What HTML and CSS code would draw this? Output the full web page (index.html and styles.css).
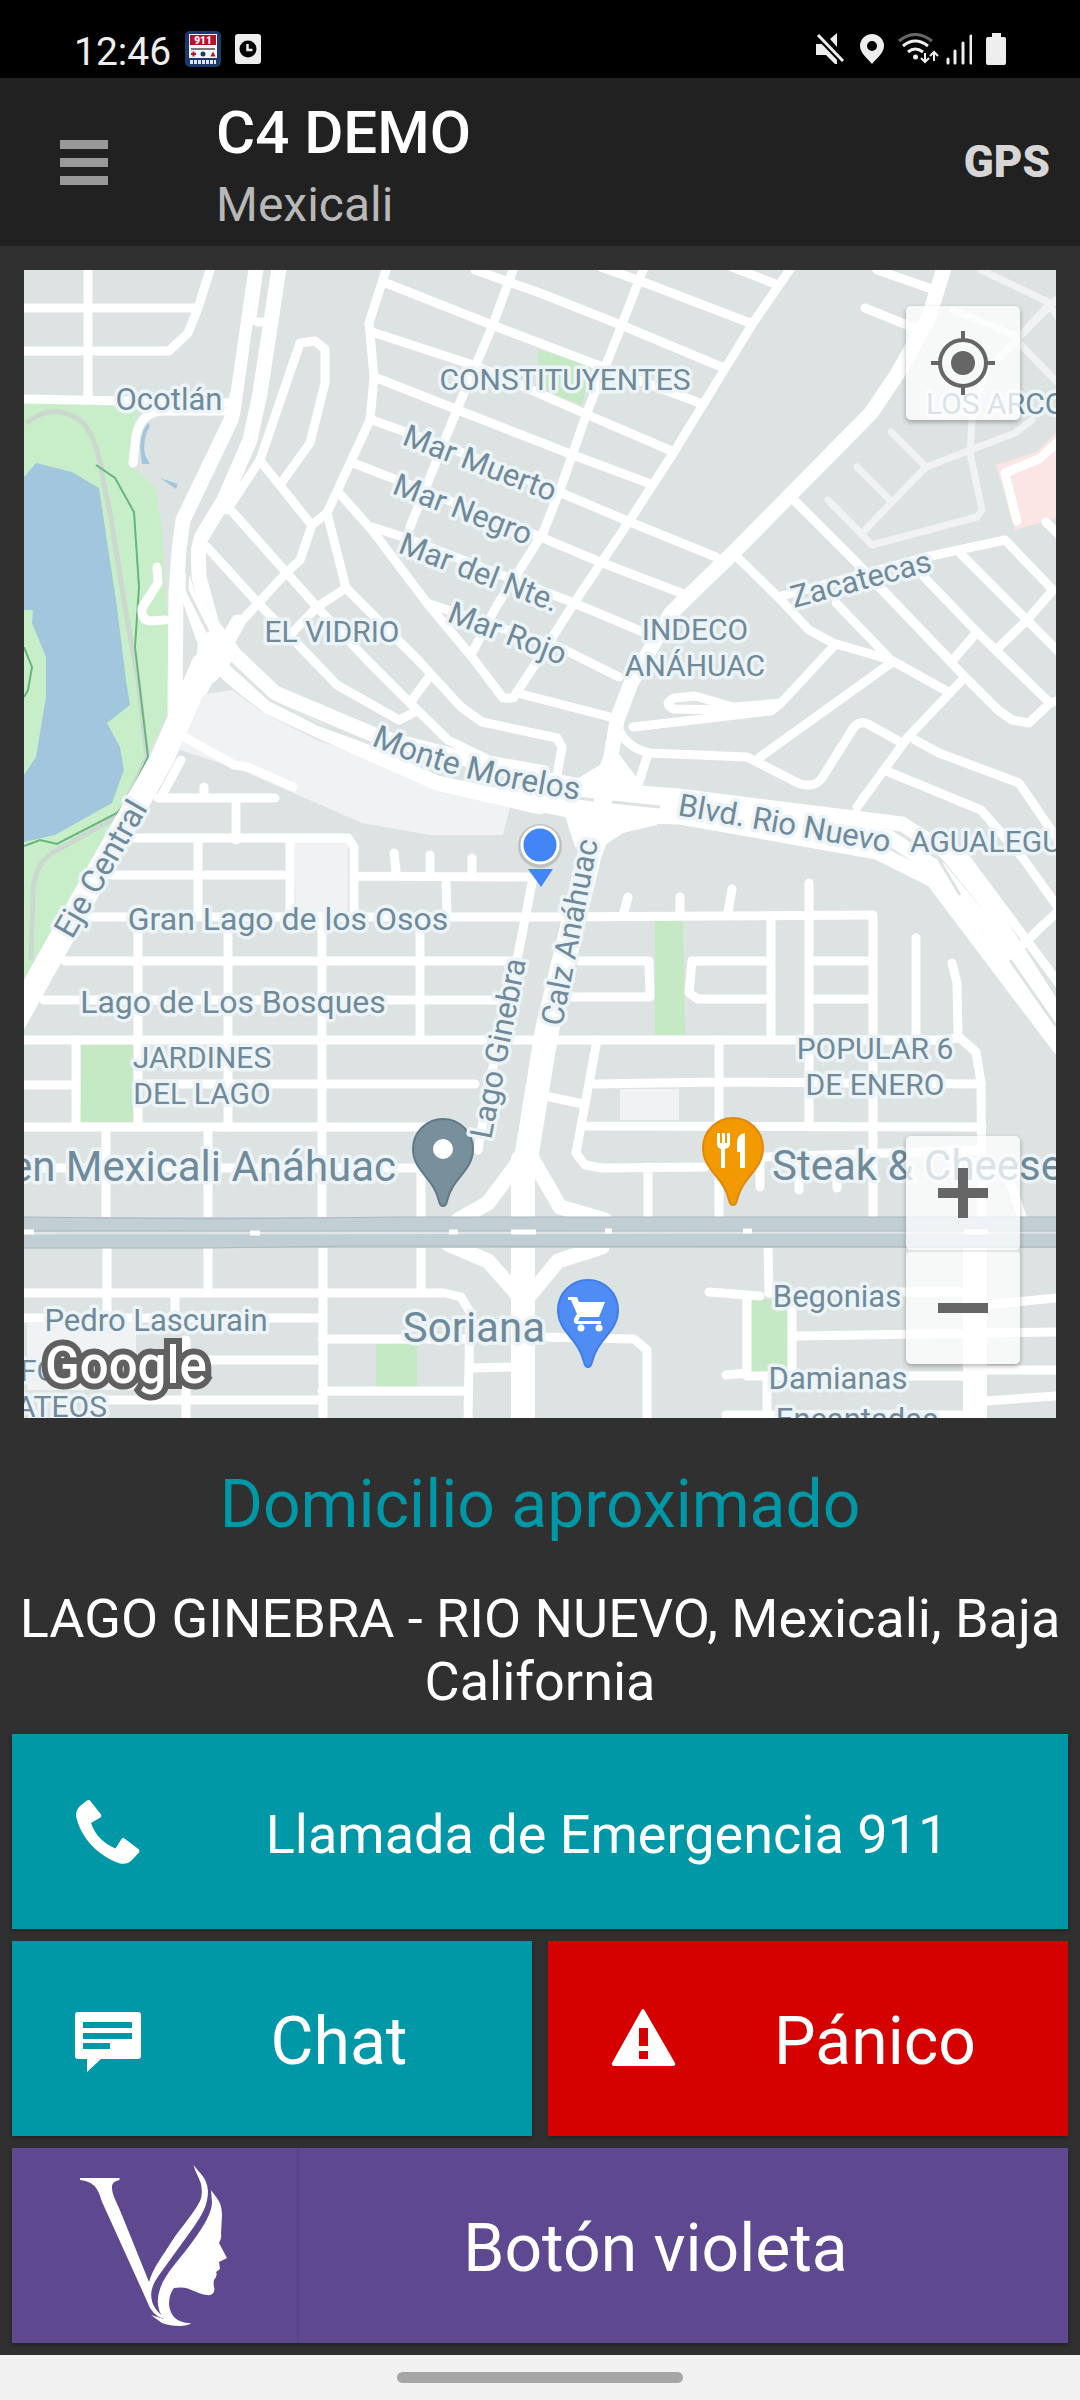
FILE: index.html
```
<!DOCTYPE html>
<html lang="es">
<head>
  <meta charset="UTF-8">
  <meta name="viewport" content="width=device-width, initial-scale=1.0">
  <title>C4 DEMO</title>
  <link rel="stylesheet" href="styles.css">
</head>
<body>
  <div class="status-bar">
    <div class="status-left">
      <span class="clock">12:46</span>
      <svg class="status-icon" width="36" height="36" viewBox="0 0 36 36">
        <rect width="36" height="36" rx="5" fill="#1d3a6e"/>
        <rect x="4" y="3" width="28" height="24" fill="#f6f6f6"/>
        <rect x="5" y="4" width="26" height="10" fill="#b5122e"/>
        <text x="18" y="13" class="app-num">911</text>
        <rect x="6" y="17" width="24" height="2" fill="#777"/>
        <path d="M6 23h5M8.500 20.500v5" stroke="#b5122e" stroke-width="2"/>
        <circle cx="18" cy="23" r="2.500" fill="#1d3a6e"/>
        <path d="M28 20.500l2.500 5h-5z" fill="#b5122e"/>
        <path d="M5 31h26" stroke="#dfe6f2" stroke-width="4" stroke-dasharray="3 1"/>
      </svg>
      <svg class="status-icon" width="26" height="32" viewBox="0 0 26 32">
        <rect width="26" height="30" y="1" rx="3" fill="#eee"/>
        <circle cx="13" cy="16" r="8.500" fill="#000"/>
        <path d="M12.500 11v6h5" fill="none" stroke="#eee" stroke-width="2.500"/>
      </svg>
    </div>
    <div class="status-right">
      <svg width="30" height="32" viewBox="0 0 30 32">
        <path d="M0 11h8l13 13v7h-2l-9-9H0zM21 0v14l-7-8z" fill="#eee"/>
        <path d="M2 2l25 26" stroke="#000" stroke-width="7"/>
        <path d="M2 2l25 26" stroke="#eee" stroke-width="3"/>
      </svg>
      <svg width="24" height="32" viewBox="0 0 24 32">
        <path fill-rule="evenodd" d="M12 1a12 12 0 0 1 12 12c0 7-8 13-12 18C8 26 0 20 0 13A12 12 0 0 1 12 1zm0 7a5 5 0 1 0 0 10 5 5 0 0 0 0-10z" fill="#eee"/>
      </svg>
      <svg width="74" height="32" viewBox="0 0 74 32">
        <g fill="none" stroke="#eee" stroke-width="3">
          <path d="M1 8Q17-5 34 8" stroke="#666"/>
          <path d="M5 13q12-10 25 0M10 19q7-6 15 0"/>
          <path d="M27 20v9m-4-4l4 4 4-4M36 28v-9m-4 4l4-4 4 4" stroke-width="2"/>
          <path d="M50 30v-4M57 30V18M65 30V10M73 30V3" stroke-linecap="round"/>
        </g>
        <circle cx="17.500" cy="24" r="2.500" fill="#eee"/>
      </svg>
      <svg width="20" height="32" viewBox="0 0 20 32">
        <path d="M6 0h9v4h3q2 0 2 2v24q0 2-2 2H2q-2 0-2-2V6q0-2 2-2h4z" fill="#eee"/>
      </svg>
    </div>
  </div>

  <header class="app-bar">
    <button class="menu-btn" type="button" aria-label="Menú">
      <span></span><span></span><span></span>
    </button>
    <div class="app-title">
      <h1>C4 DEMO</h1>
      <p>Mexicali</p>
    </div>
    <span class="gps">GPS</span>
  </header>

  <main>
    <div class="map">
      <svg class="map-canvas" viewBox="24 270 1032 1148">
        <!-- park and lake -->
        <path class="park" d="M24 403L138 407 133 467 155 487 162 527 164 570 168 620 168 713 124 803 24 980z"/>
        <path d="M26 423Q55 400 83 423 98 440 103 480L110 513 126 613 138 680 147 757 120 815 52 853Q34 865 33 893L31 960" fill="none" stroke="#cbd8cf" stroke-width="5"/>
        <path class="water" d="M24 477L36 463 72 472 99 488 117 607 126 680 130 705 107 723 120 747 124 770 112 803 55 835 24 842V775L36 757 46 697V657L32 623 33 610H24z"/>
        <path class="water" d="M148 423Q138 436 141 455L142 464H150L145 455Q142 440 150 425zM160 478L178 484 176 489z"/>
        <path class="trail" d="M96 465L115 478 134 512 139 587 135 647 148 757 126 803 117 813 57 844 40 840 24 846M24 647L32 667 28 690 24 697"/>

        <!-- green blocks -->
        <path class="green" d="M538 350L592 364 582 405 538 388zM655 920H683L685 1035H655zM81 1045H133V1122H80zM376 1344H417V1387H376zM751 1299H788V1372H751z"/>
        <!-- light blocks -->
        <path class="light" d="M200 695L232 690 262 712 317 740 510 807 503 835H430L362 823 241 770 180 750zM294 842H348V917H296zM620 1089H679V1120H620zM27 1323H136V1390H27z"/>
        <path d="M996 465L1036 452 1056 433V518L1015 530z" fill="#fbe5e5"/>

        <!-- private roads -->
        <path class="road-light" d="M981 270L1050 303 1019 337 953 310M1056 300L985 372 972 420 970 453 982 510 977 517 872 545 828 500M862 533L926 467 891 432M888 498L857 467M926 467L1015 433 1032 420M1019 343L1060 385M1045 300L1060 320"/>

        <!-- small streets -->
        <path class="road" d="M88 270V398M24 308H198M24 351H169L188 333 198 308 210 270M24 399L240 403M255 322H266"/>
        <path class="road" d="M157 567L158 583 142 608Q141 620 150 621L165 620M222 411L160 411Q140 414 136 436L133 463"/>
        <path class="road" d="M227 510L260 460 300 343 315 341 325 349V383L310 443 282 482M262 463L310 523"/>
        <path class="road" d="M386 270L369 323 374 377 370 420 327 513 312 525 300 560 286 573 238 625"/>
        <path class="road" d="M207 547L257 602 313 660 337 685 399 720 413 713M229 508L317 607 367 660 410 703 448 740 489 760 545 770M327 513L346 588 418 660 461 707 482 722 557 738 562 747 557 775M339 493L372 530 427 603 472 657 503 698H513L540 657M346 588L317 607 290 635M410 703L429 677M517 693L614 718"/>
        <path class="road" d="M513 270L492 327 458 407 410 527M643 270L621 327 588 410 561 487 543 533 496 607 472 653"/>
        <path class="road" d="M795 262L753 323 726 367 674 452 628 523 574 603 540 657"/>
        <path class="road" d="M475 270L540 293 621 325 724 368M601 267L643 282 750 323M732 267L778 285M386 283L492 325 592 363 700 403M372 332L479 367 588 415 674 452M377 378L458 410 573 455 648 483M372 420L448 447 559 492 630 522 716 557M353 463L410 485 543 538 600 562 681 593M372 527L406 538 574 603 643 632M427 603L561 648 619 677M877 270L929 288M865 308L912 327"/>
        <path class="road" d="M733 553L778 597 809 630 833 643 891 660 950 693M778 597L926 557 1005 540 1053 590 1027 620 998 648M791 497L857 563 953 663M836 603L891 660M879 587L965 677 998 710 1012 720 1029 723 1050 703 1060 700M924 577L977 632 1050 703M960 553L1027 620 1060 653M977 632L953 660M1046 522L1060 536M1017 521L1005 473 1039 459 1060 440"/>
        <path class="road" d="M965 677L908 737 857 807M833 647L781 703 733 707 695 696 674 698Q662 704 674 709L771 711 781 703M633 727L771 711M891 663L760 757"/>
        <path class="road" d="M617 725Q625 748 650 753L747 757 800 784Q815 788 822 778L854 727Q860 720 868 724L902 743M647 757L638 785M915 740L939 753 1019 783 1060 843M884 770L981 810 1022 857 1060 910M919 833L967 860 1060 985M1015 952L1056 913"/>
        <path class="road" d="M186 738L234 765 248 767 293 787M181 760L162 795M158 798H275M204 787V798M236 800V840M135 838H348L354 847V917M198 840V917M290 840V917M112 875H290M354 876L527 877M394 853L396 872M430 855V872M472 858V872M446 877L447 917M86 917H540L873 915M138 917V1125M228 917V1127M322 917V1217M420 917V1035M65 961H513M44 1000H508M24 1040H940L960 1038 976 1052 981 1083 982 1217"/>
        <path class="road" d="M533 878L517 960 490 1080 478 1150M76 1040V1127M24 1085H76M137 1084H475M24 1127H430M106 1127V1217M208 1127V1217M421 1168V1217M24 1168H421"/>
        <path class="road" d="M580 961H649L650 997H573M628 897L624 912M680 897V912M732 889L728 912M809 883V1126M771 917V1038M873 917V1217M771 961H692L689 993 698 999H771M809 961H873M809 999H873M916 938V1035M952 963L957 983 958 1035"/>
        <path class="road" d="M597 1040L576 1153 585 1165 602 1168 705 1167M550 1097L583 1104M719 1040V1217M595 1084L719 1082 981 1084M585 1126L982 1127M648 1167V1217M760 1157V1187M799 1160V1190M837 1160V1188M764 1157L982 1150M1005 1165L1022 1217"/>
        <path class="road" d="M107 1247V1320M208 1247V1293M323 1247V1418M421 1247V1293M24 1293H445L461 1297 470 1312 468 1418M175 1293V1318M186 1340V1418M24 1318H322M322 1339H470M190 1360H322M472 1368L514 1367M322 1391H466M107 1400H322"/>
        <path class="road" d="M768 1247L769 1293M709 1292L760 1296M747 1297V1373L726 1375M747 1376H975M792 1303V1372M797 1336L1056 1332M890 1292H975M985 1305L1056 1298M985 1370H1056M985 1401L1056 1396M767 1376V1418M726 1415H975M540 1337L634 1339 647 1350V1418"/>

        <!-- avenues -->
        <path class="avenue" d="M257 262L238 393 231 420 183 520 179 550 176 593 175 713M280 262L260 393 250 440 224 500 198 543 199 577 212 625 235 655 275 693 379 737M183 580L203 637 222 664M238 622L200 690M207 655L238 683 269 707 324 733 437 783 540 807"/>
        <path class="avenue" d="M948 255L929 317 898 373 871 413 733 553 671 613 631 683 617 720 611 757"/>
        <path class="avenue wide" d="M203 665L163 757 41 974 10 1030"/>
        <path class="avenue wide" d="M210 640L208 672 226 650"/>
        <path class="avenue" d="M379 737L540 778 600 790 678 796 902 824 946 852 985 900 1060 1018M437 783L592 815 680 817 877 852 933 880 1060 1048M500 793L590 812M650 806L890 838 940 870 990 930 1060 1032"/>
        <path class="avenue wide" d="M607 810L590 853 547 1030 525 1165M523 1160V1418M975 1247V1418"/>
        <path d="M606 750L600 765 575 780 560 800 575 847H602L623 833 657 825 640 782 620 755z" fill="#fff"/>
        <path class="avenue" d="M520 1160L488 1203 458 1220M448 1244L488 1261 518 1295M530 1155L560 1207 605 1220M602 1247L558 1261 530 1295"/>
        <path d="M254 325L241 420 195 525 188 555 187 590 208 632M235 668L270 700 320 725 370 743M578 798L594 800M612 802L660 807M920 848L938 858 960 895M1010 960L1056 1026" fill="none" stroke="#dde2e2" stroke-width="3"/>

        <!-- railway -->
        <path d="M24 1217H1056V1248H24z" fill="#c1cfd5"/>
        <path d="M24 1217L210 1219 400 1217H1056M24 1248H210L350 1246 1056 1247" fill="none" stroke="#a9b8c0" stroke-width="1"/>
        <path d="M24 1233L1056 1232" stroke="#dfe5e8" stroke-width="3"/>
        <path d="M24 1231H1056" stroke="#a9b8c0" stroke-width="1"/>
        <path d="M24 1232H34M250 1233H260M449 1232H458M511 1232H536M605 1231H612M743 1231H752M964 1232H988" stroke="#fff" stroke-width="5"/>

        <!-- place pins -->
        <defs>
          <path id="pin" d="M0 57Q-3 57-4 52C-9 29-30 22-30 0A30 30 0 0 1 30 0C30 22 9 29 4 52Q3 57 0 57z"/>
          <path id="street-monte" d="M371 745Q460 785 600 803"/>
        </defs>
        <g transform="translate(443 1149)">
          <use href="#pin" fill="#78909c" stroke="#5f7a87" stroke-width="2"/>
          <circle r="10" fill="#fff"/>
        </g>
        <g transform="translate(733 1148)">
          <use href="#pin" fill="#f29900" stroke="#dd8a10" stroke-width="2"/>
          <path d="M-16-15h3v10h2v-10h3v10h2v-10h3V-4q0 4-5 5v19h-4V1q-4-1-4-5zM12-15V20H7V4H4v-9q0-9 8-10z" fill="#fff"/>
        </g>
        <g transform="translate(588 1310)">
          <use href="#pin" fill="#4f8df5" stroke="#3f7ee8" stroke-width="2"/>
          <path d="M-20-13h9l2 5h26l-6 15H-8l-2 4h23v3h-25q-4-2-1-7l2-3-6-14h-3z" fill="#fff"/>
          <circle cx="-7" cy="18" r="3.500" fill="#fff"/>
          <circle cx="11" cy="18" r="3.500" fill="#fff"/>
        </g>

        <g class="labels">
          <text x="565" y="390" text-anchor="middle">CONSTITUYENTES</text>
          <text x="926" y="414">LOS ARCOS</text>
          <text x="332" y="642" text-anchor="middle">EL VIDRIO</text>
          <text x="695" y="640" text-anchor="middle">INDECO</text>
          <text x="695" y="676" text-anchor="middle">ANÁHUAC</text>
          <text x="910" y="852">AGUALEGUAS</text>
          <text x="202" y="1068" text-anchor="middle">JARDINES</text>
          <text x="202" y="1104" text-anchor="middle">DEL LAGO</text>
          <text x="875" y="1059" text-anchor="middle">POPULAR 6</text>
          <text x="875" y="1095" text-anchor="middle">DE ENERO</text>
          <text x="20" y="1381">FOVI</text>
          <text x="107" y="1417" text-anchor="end">MATEOS</text>
          <g class="street">
            <text x="169" y="410" text-anchor="middle">Ocotlán</text>
            <text transform="translate(401 444) rotate(21)">Mar Muerto</text>
            <text transform="translate(391 493) rotate(21)">Mar Negro</text>
            <text transform="translate(397 552) rotate(21)">Mar del Nte.</text>
            <text transform="translate(446 621) rotate(21)">Mar Rojo</text>
            <text transform="translate(794 608) rotate(-15)">Zacatecas</text>
            <text transform="translate(677 815) rotate(10)">Blvd. Rio Nuevo</text>
            <text transform="translate(562 1027) rotate(-79)">Calz Anáhuac</text>
            <text transform="translate(491 1140) rotate(-79)">Lago Ginebra</text>
            <text x="156" y="1331" text-anchor="middle">Pedro Lascurain</text>
            <text x="837" y="1307" text-anchor="middle">Begonias</text>
            <text x="838" y="1389" text-anchor="middle">Damianas</text>
            <text x="857" y="1430" text-anchor="middle">Encantadas</text>
          </g>
          <g class="street-main">
            <text><textPath href="#street-monte">Monte Morelos</textPath></text>
            <text transform="translate(72 940) rotate(-60)">Eje Central</text>
            <text x="288" y="930" text-anchor="middle">Gran Lago de los Osos</text>
            <text x="233" y="1013" text-anchor="middle">Lago de Los Bosques</text>
          </g>
          <g class="poi">
            <text x="396" y="1181" text-anchor="end">en Mexicali Anáhuac</text>
            <text x="772" y="1180">Steak &amp; Cheese</text>
            <text x="545" y="1342" text-anchor="end">Soriana</text>
          </g>
        </g>

        <!-- current position -->
        <circle cx="540" cy="846" r="22" fill="#000" opacity=".15"/>
        <path d="M528 869H553L541 887z" fill="#4285f4"/>
        <circle cx="540" cy="845" r="18" fill="#4285f4" stroke="#fff" stroke-width="3"/>

        <text class="google" x="45" y="1383">Google</text>
      </svg>

      <button class="map-btn locate" type="button" aria-label="Mi ubicación">
        <svg width="66" height="66" viewBox="0 0 66 66">
          <circle cx="33" cy="33" r="23" fill="none" stroke="#666" stroke-width="4"/>
          <circle cx="33" cy="33" r="12" fill="#666"/>
          <path d="M33 1v9M33 56v9M1 33h9M56 33h9" stroke="#666" stroke-width="4"/>
        </svg>
      </button>
      <div class="zoom">
        <button class="map-btn" type="button" aria-label="Acercar">
          <svg width="50" height="50" viewBox="0 0 50 50"><path d="M0 25h50M25 0v50" stroke="#666" stroke-width="10"/></svg>
        </button>
        <button class="map-btn" type="button" aria-label="Alejar">
          <svg width="50" height="50" viewBox="0 0 50 50"><path d="M0 25h50" stroke="#666" stroke-width="10"/></svg>
        </button>
      </div>
    </div>

    <h2 class="address-title">Domicilio aproximado</h2>
    <p class="address">LAGO GINEBRA - RIO NUEVO, Mexicali, Baja California</p>

    <div class="actions">
      <button class="action call" type="button">
        <svg class="action-icon" viewBox="0 0 100 92">
          <path d="M27 14.500q2-1 3 0L41 28.500q1 2-.5 3L31 37C35 49 44 58 55.500 62.500L61.500 53q1.500-1.500 3-.5L79 63.500q1 1.500 0 3L72 74Q67 79 60 77.500C38 70 21 52 16.300 31Q15.500 24 20 20z" fill="#fff"/>
        </svg>
        <span class="action-label small">Llamada de Emergencia 911</span>
      </button>
      <button class="action" type="button">
        <svg class="action-icon" viewBox="0 0 100 92">
          <path fill-rule="evenodd" d="M18 19H78q3 0 3 3V63q0 3-3 3H41L27 79V66H18q-3 0-3-3V22q0-3 3-3zM23 29v6H72v-6zM23 40v6H72v-6zM23 50v6H50v-6z" fill="#fff"/>
        </svg>
        <span class="action-label">Chat</span>
      </button>
      <button class="action panic" type="button">
        <svg class="action-icon" viewBox="0 0 100 92">
          <path fill-rule="evenodd" d="M45 18q2-4 4 0L79 70q1 3-2 3H18q-3 0-2-3zM43 35V53h9V35zM43 58v8h9v-8z" fill="#fff"/>
        </svg>
        <span class="action-label">Pánico</span>
      </button>
      <button class="action violet" type="button">
        <span class="violet-logo">
          <svg width="148" height="162" viewBox="0 0 148 162">
            <path fill="#fff" d="M0 13H39.500V15Q31 17 32 23C32 29 36 36 39 43L48 65 69 117C73 103 82 92 92 76 102 61 112 51 120 36Q123 30 121 19C119 12 115 7 113.500 0 119 8 127 12 128 26 128 40 122 50 113 63L82 106C76 114 73 119 71.500 126Q69 143 87 154 77 154 70 143L62 125 23 39C19 30 19 17 0 15z"/>
            <path fill="#fff" d="M131 25C136 33 142 36 142 50L141 69Q142 73 139 78L147 93 139 97 140 104 136 107Q138 110 134 115 133 119 134.500 124 134 131 127 130C117 129 110 122 100 122.500L94 123Q89 129 89 139C90 150 96 158 111 158 108 162 92 162 82 158L71 150 84 154Q74 141 80 124C85 108 102 92 113 76 123 62 132 48 132 37z"/>
          </svg>
        </span>
        <span class="action-label">Botón violeta</span>
      </button>
    </div>
  </main>

  <footer class="nav-bar"><span class="nav-pill"></span></footer>
</body>
</html>
```
FILE: styles.css
```
* {
  box-sizing: border-box;
}

body {
  margin: 0;
  min-height: 100vh;
  display: flex;
  flex-direction: column;
  background-color: #303030;
  color: white;
  font-family: Roboto, "Liberation Sans", sans-serif;
}

button {
  border: none;
  padding: 0;
  color: white;
  font-family: inherit;
  cursor: pointer;
}

/* Status bar */
.status-bar {
  height: 78px;
  padding: 20px 74px 0;
  display: flex;
  justify-content: space-between;
  align-items: center;
  background-color: black;
}

.status-left, .status-right {
  display: flex;
  align-items: center;
  gap: 14px;
}

.clock {
  padding-top: 5px;
  font-size: 39px;
  line-height: 46px;
  color: #eee;
}

.app-num {
  font-size: 10px;
  font-weight: 900;
  fill: white;
  text-anchor: middle;
}

/* App bar */
.app-bar {
  height: 168px;
  padding: 0 30px 0 60px;
  display: flex;
  align-items: center;
  background-color: #212121;
}

.menu-btn {
  width: 48px;
  height: 45px;
  margin-right: 108px;
  display: flex;
  flex-direction: column;
  justify-content: space-between;
  background: none;
}

.menu-btn span {
  width: 48px;
  height: 9px;
  background-color: #999;
}

.app-title {
  flex: 1;
  padding-top: 14px;
}

.app-title h1 {
  margin: 0;
  font-size: 60px;
  line-height: 72px;
  font-weight: 500;
}

.app-title p {
  margin: 0;
  font-size: 48px;
  line-height: 72px;
  color: #b8b8b8;
}

.gps {
  font-size: 44px;
  font-weight: 900;
  color: #d6d6d6;
}

/* Map */
main {
  flex: 1;
}

.map {
  position: relative;
  margin: 24px 24px 0;
  background-color: #dde2e2;
}

.map-canvas {
  display: block;
  width: 100%;
  overflow: hidden;
}

.park {
  fill: #c8eec9;
}

.water {
  fill: #a3c6df;
}

.green {
  fill: #c5e8c5;
}

.light {
  fill: #f0f2f3;
}

.trail {
  fill: none;
  stroke: #66b57c;
  stroke-width: 2;
}

.road, .road-light, .avenue {
  fill: none;
  stroke: white;
  stroke-width: 9;
  stroke-linecap: round;
  stroke-linejoin: round;
}

.road-light {
  stroke: #f0f2f3;
  stroke-width: 7;
}

.avenue {
  stroke-width: 15;
}

.avenue.wide {
  stroke-width: 24;
}

.labels text {
  font-size: 30px;
  fill: #708a99;
  stroke: #ecf4f8;
  stroke-width: 7;
  stroke-linejoin: round;
  paint-order: stroke;
}

.labels .street text {
  font-size: 31px;
}

.labels .street-main text {
  font-size: 32px;
}

.labels .poi text {
  font-size: 42px;
}

.google {
  font-size: 51px;
  font-weight: 500;
  fill: white;
  stroke: #606060;
  stroke-width: 12;
  paint-order: stroke;
}

.map-btn {
  width: 114px;
  height: 114px;
  display: flex;
  justify-content: center;
  align-items: center;
  background-color: rgba(255, 255, 255, 0.75);
  border-radius: 5px;
  box-shadow: 0 2px 5px rgba(0, 0, 0, 0.3);
}

.locate {
  position: absolute;
  top: 36px;
  right: 36px;
}

.zoom {
  position: absolute;
  right: 36px;
  bottom: 54px;
  border-radius: 5px;
  box-shadow: 0 2px 5px rgba(0, 0, 0, 0.3);
}

.zoom .map-btn {
  box-shadow: none;
}

.zoom .map-btn + .map-btn {
  border-top: 2px solid rgba(0, 0, 0, 0.08);
}

/* Address */
.address-title {
  margin: 48px 0 44px;
  font-size: 66px;
  line-height: 77px;
  font-weight: 400;
  text-align: center;
  color: #0097a7;
}

.address {
  margin: 0 12px 21px;
  font-size: 54px;
  line-height: 63px;
  text-align: center;
}

/* Action buttons */
.actions {
  padding: 0 12px 12px;
  display: grid;
  grid-template-columns: 1fr 1fr;
  gap: 12px 16px;
}

.action {
  height: 195px;
  padding-left: 48px;
  display: flex;
  align-items: center;
  background-color: #0097a7;
  box-shadow: 0 2px 4px rgba(0, 0, 0, 0.3);
}

.action-icon {
  width: 100px;
  height: 92px;
  margin-right: -14px;
  flex: none;
}

.action-label {
  flex: 1;
  padding-top: 6px;
  font-size: 66px;
  line-height: 77px;
  text-align: center;
}

.action-label.small {
  font-size: 54px;
}

.call, .violet {
  grid-column: 1 / 3;
}

.panic {
  background-color: #d50000;
}

.violet {
  padding: 0 56px 0 0;
  background-color: #5e4991;
}

.violet-logo {
  width: 287px;
  height: 195px;
  padding-left: 68px;
  display: flex;
  align-items: center;
  border-right: 2px solid #574387;
}

/* Bottom navigation */
.nav-bar {
  height: 45px;
  display: flex;
  justify-content: center;
  align-items: center;
  background-color: #f1f1f1;
}

.nav-pill {
  width: 286px;
  height: 11px;
  border-radius: 6px;
  background-color: #a6a6a6;
}
```
